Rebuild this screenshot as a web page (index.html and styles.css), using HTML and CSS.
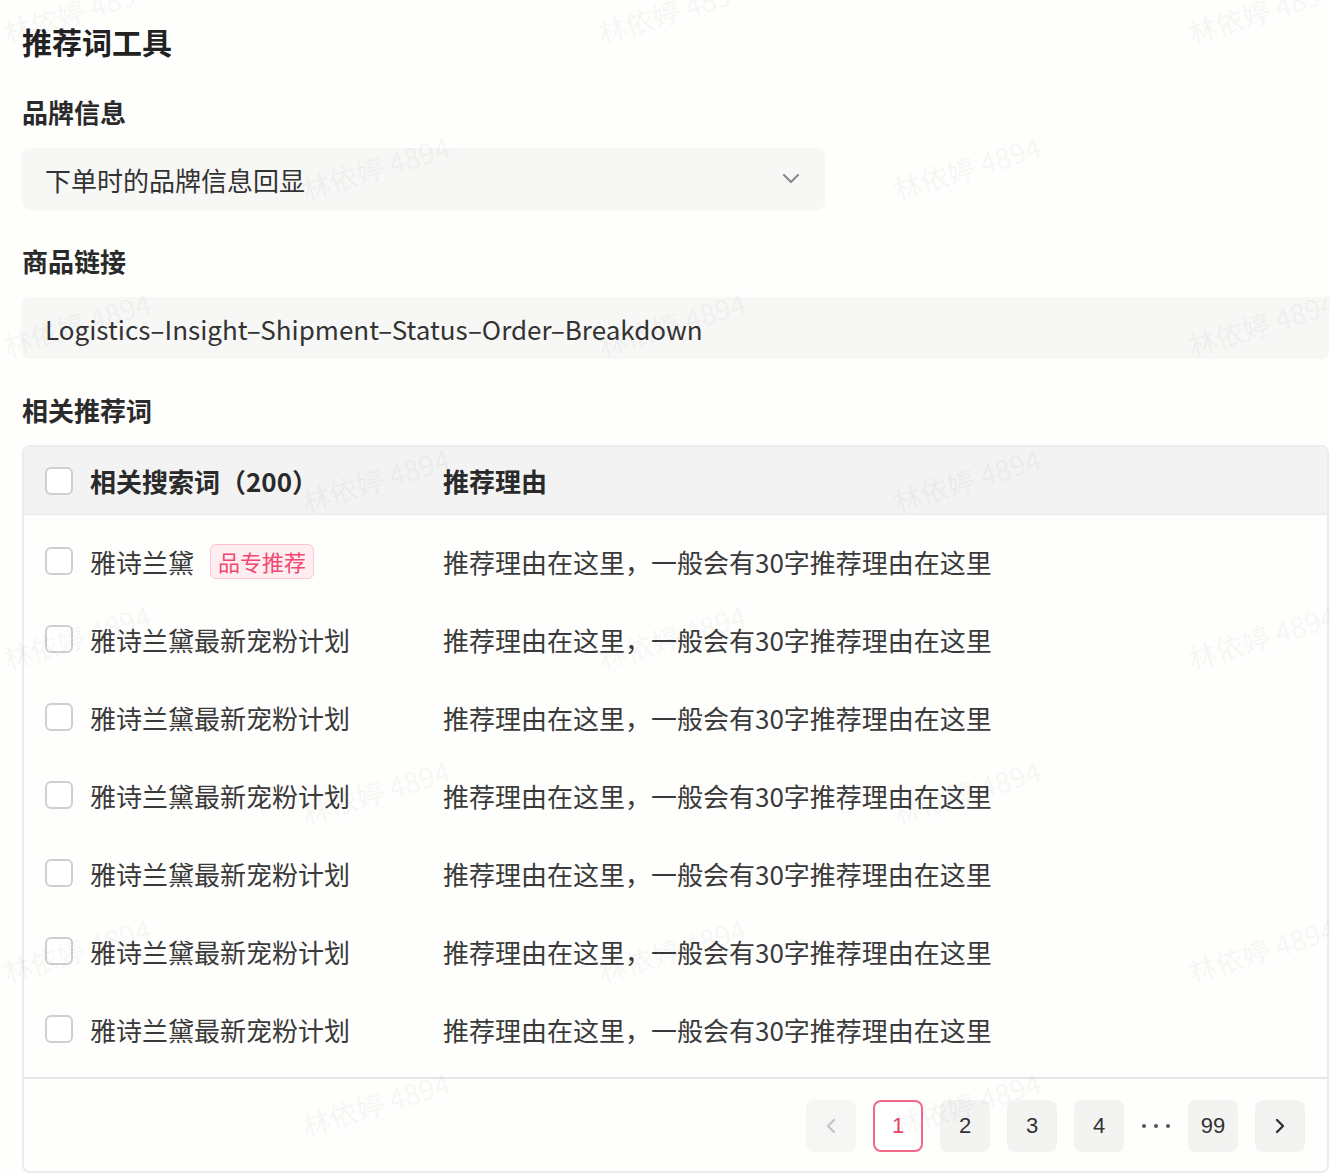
FILE: index.html
```html
<!DOCTYPE html>
<html>
<head>
  <meta charset="utf-8">
  <title>推荐词工具</title>
  <link rel="stylesheet" href="styles.css">
</head>
<body>
  <div class="page">
    <h1 class="page-title">推荐词工具</h1>

    <div class="field-label">品牌信息</div>
    <div class="select-box">
      <span>下单时的品牌信息回显</span>
      <svg class="chevron" width="20" height="12" viewBox="0 0 20 12">
        <path d="M3 2 L10 9 L17 2" fill="none" stroke="#8a8a8a" stroke-width="2.2" stroke-linecap="round" stroke-linejoin="round"/>
      </svg>
    </div>

    <div class="field-label">商品链接</div>
    <div class="input-box">Logistics–Insight–Shipment–Status–Order–Breakdown</div>

    <div class="field-label last">相关推荐词</div>
    <div class="word-table">
      <div class="table-head">
        <div class="col-word"><span class="checkbox"></span><span>相关搜索词（200）</span></div>
        <div class="col-reason">推荐理由</div>
      </div>
      <div class="table-body" id="table-body"></div>
      <div class="table-foot">
        <div class="pager">
          <span class="page-btn disabled">
            <svg width="14" height="20" viewBox="0 0 14 20"><path d="M10 4 L4 10 L10 16" fill="none" stroke="#c4c4c4" stroke-width="2.2" stroke-linecap="round" stroke-linejoin="round"/></svg>
          </span>
          <span class="page-btn active">1</span>
          <span class="page-btn">2</span>
          <span class="page-btn">3</span>
          <span class="page-btn">4</span>
          <span class="page-dots"><i></i><i></i><i></i></span>
          <span class="page-btn">99</span>
          <span class="page-btn">
            <svg width="14" height="20" viewBox="0 0 14 20"><path d="M4 4 L10 10 L4 16" fill="none" stroke="#333" stroke-width="2.4" stroke-linecap="round" stroke-linejoin="round"/></svg>
          </span>
        </div>
      </div>
    </div>
  </div>

  <div class="watermarks" id="watermarks"></div>

  <script>
    // rows
    const rows = [
      { word: '雅诗兰黛', tag: '品专推荐' },
      { word: '雅诗兰黛最新宠粉计划' },
      { word: '雅诗兰黛最新宠粉计划' },
      { word: '雅诗兰黛最新宠粉计划' },
      { word: '雅诗兰黛最新宠粉计划' },
      { word: '雅诗兰黛最新宠粉计划' },
      { word: '雅诗兰黛最新宠粉计划' }
    ];
    const body = document.getElementById('table-body');
    rows.forEach(function (r) {
      const row = document.createElement('div');
      row.className = 'table-row';
      row.innerHTML =
        '<div class="col-word"><span class="checkbox"></span><span>' + r.word + '</span>' +
        (r.tag ? '<span class="tag">' + r.tag + '</span>' : '') + '</div>' +
        '<div class="col-reason">推荐理由在这里，一般会有30字推荐理由在这里</div>';
      body.appendChild(row);
    });

    // watermark grid
    const wm = document.getElementById('watermarks');
    const spots = [];
    for (let i = 0; i < 4; i++) {
      [80, 675, 1265].forEach(function (x) { spots.push([x, 8 + i * 313]); });
      [379, 970].forEach(function (x) { spots.push([x, 165 + i * 312]); });
    }
    spots.forEach(function (p) {
      const s = document.createElement('span');
      s.className = 'mark';
      s.textContent = '林依婷 4894';
      s.style.left = (p[0] - 80) + 'px';
      s.style.top = (p[1] - 18) + 'px';
      wm.appendChild(s);
    });
  </script>
</body>
</html>
```

FILE: styles.css
```css
body {
  margin: 0;
  padding: 0;
  background-color: #fefefc;
  font-family: "Noto Sans CJK SC", "Noto Sans", sans-serif;
  color: #333;
}

.page {
  padding: 21px 1px 0 22px;
}

.page-title {
  margin: 0;
  font-size: 30px;
  line-height: 40px;
  font-weight: bold;
  color: #222;
}

.field-label {
  margin: 33px 0 18px;
  font-size: 26px;
  line-height: 36px;
  font-weight: bold;
  color: #2a2a2a;
}

.field-label.last {
  margin-bottom: 17px;
}

.select-box {
  width: 803px;
  height: 62px;
  box-sizing: border-box;
  padding: 0 24px 0 23px;
  display: flex;
  align-items: center;
  justify-content: space-between;
  background-color: #f7f7f6;
  border-radius: 8px;
  font-size: 26px;
  color: #333;
}

.input-box {
  height: 62px;
  box-sizing: border-box;
  padding: 0 23px;
  display: flex;
  align-items: center;
  background-color: #f7f7f6;
  border-radius: 8px;
  font-size: 26px;
  color: #333;
}

.word-table {
  border: 2px solid #ececec;
  border-radius: 8px;
  overflow: hidden;
}

.table-head,
.table-row {
  display: flex;
  align-items: center;
  padding: 0 22px 0 21px;
  font-size: 26px;
}

.table-head {
  height: 67px;
  background-color: #f3f3f3;
  border-bottom: 1px solid #e8e8e8;
  font-weight: bold;
  color: #2a2a2a;
}

.table-body {
  padding: 7px 0 9px;
  background-color: #fefefc;
}

.table-row {
  height: 78px;
  color: #3a3a3a;
}

.col-word {
  width: 398px;
  display: flex;
  align-items: center;
}

.col-reason {
  flex: 1;
}

.checkbox {
  width: 28px;
  height: 28px;
  box-sizing: border-box;
  border: 2px solid #cfcfcf;
  border-radius: 6px;
  background-color: #fff;
  margin-right: 17px;
  flex-shrink: 0;
}

.tag {
  margin-left: 16px;
  padding: 0 7px;
  height: 35px;
  line-height: 33px;
  box-sizing: border-box;
  border: 1px solid #ffc4d0;
  border-radius: 6px;
  background-color: #ffeef1;
  color: #f2476e;
  font-size: 22px;
}

.table-foot {
  border-top: 2px solid #e6e6e6;
  height: 92px;
  display: flex;
  align-items: center;
  justify-content: flex-end;
  padding-right: 22px;
}

.pager {
  display: flex;
  align-items: center;
  gap: 17px;
  margin-top: 2px;
}

.page-btn {
  width: 50px;
  height: 52px;
  box-sizing: border-box;
  display: flex;
  align-items: center;
  justify-content: center;
  background-color: #f3f3f2;
  border-radius: 8px;
  font-family: "Liberation Sans", sans-serif;
  font-size: 22px;
  color: #333;
}

.page-btn.disabled {
  background-color: #f6f6f5;
}

.page-btn.active {
  background-color: #fff;
  border: 2px solid #f2678a;
  color: #f0406a;
}

.page-dots {
  width: 30px;
  display: flex;
  justify-content: space-between;
  padding: 0 1px;
  box-sizing: border-box;
}

.page-dots i {
  width: 4px;
  height: 4px;
  border-radius: 50%;
  background-color: #555;
}

.watermarks {
  position: absolute;
  left: 0;
  top: 0;
  width: 1330px;
  height: 1174px;
  overflow: hidden;
  pointer-events: none;
}

.mark {
  position: absolute;
  width: 170px;
  font-size: 28px;
  line-height: 36px;
  white-space: nowrap;
  color: rgba(0, 0, 0, 0.055);
  transform: rotate(-17deg);
}
```
